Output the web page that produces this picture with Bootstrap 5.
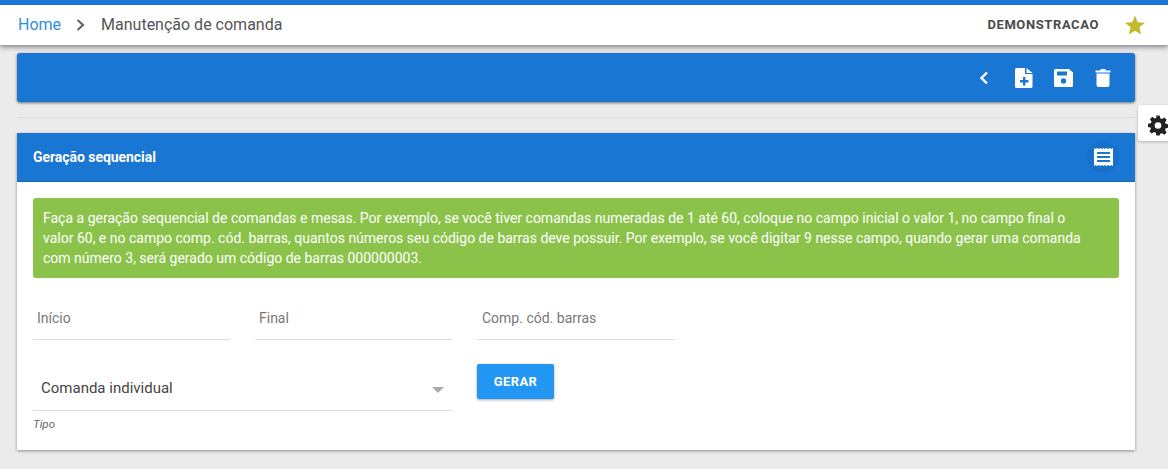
<!DOCTYPE html>
<html lang="pt-BR">
<head>
<meta charset="utf-8">
<title>Manutenção de comanda</title>
<link href="https://cdn.jsdelivr.net/npm/bootstrap@5.3.0/dist/css/bootstrap.min.css" rel="stylesheet">
<style>
html,body{height:469px;overflow:hidden}
body{background:#ebebeb;font-family:Roboto,"Liberation Sans",sans-serif;color:#555}
.topbar{height:45px;background:#fff;border-top:5px solid #1976d2;box-shadow:0 2px 5px rgba(0,0,0,.45);padding:0 23px 0 18px;position:relative;z-index:2}
.crumb-home{color:#2f8fe0;font-size:16px;text-decoration:none}
.crumb-cur{font-size:16px;color:#555;margin-left:15px}
.crumb-sep{margin-left:15px;display:block}
.company{font-size:13px;font-weight:700;letter-spacing:.6px;color:#4a4a4a;margin-right:26px}
.pagewrap{padding:8px 33px 0 17px}
.toolrow{height:49px;background:#1976d2;border-radius:3px;box-shadow:0 1px 3px rgba(0,0,0,.55);padding-right:24px}
.toolsvg{display:block;fill:#fff}
.tool-back{margin-right:25px}
.tool-new{margin-right:21px}
.tool-save{margin-right:22px}
.sepline{height:1px;background:#dcdcdc;margin:15px 0}
.panel{height:317px;background:#fff;box-shadow:0 1px 3px rgba(0,0,0,.4)}
.panelhead{height:49px;background:#1976d2;color:#fff;padding:0 16px;border-bottom:1px solid #1669bd}
.paneltitle{font-size:14px;font-weight:700;letter-spacing:-.05px}
.iconround{width:32px;height:32px;border-radius:50%;background:#1870c8}
.panelbody{padding:16px 16px 0}
.infobox{height:80px;background:#8bc34a;color:#fff;font-size:14px;line-height:20px;border-radius:3px;padding:10px 24px 0 10px}
.fieldrow{gap:25px;margin-top:22px}
.fieldbox{width:197px;height:40px;border-bottom:1px solid #ddd;font-size:14px;color:#777;padding:8px 4px 0;line-height:20px}
.fieldbox.wide{width:198px;padding-left:5px}
.selwrap{width:419px}
.selbox{height:46px;border-bottom:1px solid #ddd;padding:2px 8px 0 8px;font-size:15px;color:#444}
.selcaret{width:0;height:0;border-left:6px solid transparent;border-right:6px solid transparent;border-top:6px solid #aaa;margin-top:2px}
.tipolabel{font-size:11.5px;font-style:italic;color:#666;margin-top:6px;line-height:14px}
.gerar{width:77px;height:35px;background:#2196f3;color:#fff;font-size:13px;font-weight:700;border:0;border-radius:2px;box-shadow:0 1px 3px rgba(0,0,0,.35);padding:0;margin-top:-1px;letter-spacing:.4px}
.row2{gap:25px;margin-top:25px}
.gearbtn{position:absolute;top:105px;left:1138px;width:40px;height:36px;background:#fff;border-radius:3px;box-shadow:0 1px 3px rgba(0,0,0,.25);padding:8px 0 0 10px}
</style>
</head>
<body>
<header class="topbar d-flex align-items-center justify-content-between">
  <nav class="d-flex align-items-center">
    <a class="crumb-home" href="#">Home</a>
    <svg class="crumb-sep" width="10" height="14" viewBox="0 0 10 14"><path d="M1.500 2L7 7l-5.500 5" fill="none" stroke="#666" stroke-width="2.200"/></svg>
    <span class="crumb-cur">Manutenção de comanda</span>
  </nav>
  <div class="d-flex align-items-center">
    <span class="company">DEMONSTRACAO</span>
    <svg width="20" height="20" viewBox="0 0 22 21"><path d="M11 0l3 7.400 8 .6-6.100 5.100L17.800 21 11 16.800 4.200 21l1.900-7.900L0 8l8-.6z" fill="#c0ba2c"/></svg>
  </div>
</header>
<main class="pagewrap">
  <div class="toolrow d-flex align-items-center justify-content-end">
    <svg class="toolsvg tool-back" width="12" height="14" viewBox="0 0 12 14"><path d="M9 1.500L3.500 7 9 12.500" fill="none" stroke="#fff" stroke-width="2.400"/></svg>
    <svg class="toolsvg tool-new" width="18" height="20" viewBox="0 0 18 20"><path d="M1.500 0H10v6h7.500v12.500a1.500 1.500 0 0 1-1.500 1.500H1.500A1.500 1.500 0 0 1 0 18.500v-17A1.500 1.500 0 0 1 1.500 0z"/><path d="M11.500 0l6 5h-6z"/><path d="M8 9h2.400v3h3v2.400h-3v3H8v-3H5v-2.400h3z" fill="#1976d2"/></svg>
    <svg class="toolsvg tool-save" width="19" height="18" viewBox="0 0 19 18"><path d="M1.500 0H15l4 3.500v13a1.500 1.500 0 0 1-1.500 1.500h-16A1.500 1.500 0 0 1 0 16.500v-15A1.500 1.500 0 0 1 1.500 0z"/><path d="M3 2.500h10v4H3z" fill="#1976d2"/><circle cx="9.500" cy="12" r="2.700" fill="#1976d2"/></svg>
    <svg class="toolsvg" width="16" height="18" viewBox="0 0 15 18"><path d="M0 1.500h4.500L5.500 0h4l1 1.500H15v2H0z"/><path d="M1 4.500h13V16a2 2 0 0 1-2 2H3a2 2 0 0 1-2-2z"/></svg>
  </div>
  <div class="sepline"></div>
  <section class="panel">
    <div class="panelhead d-flex align-items-center justify-content-between">
      <span class="paneltitle">Geração sequencial</span>
      <span class="iconround d-flex align-items-center justify-content-center">
        <svg width="19" height="18" viewBox="0 0 19 18"><path d="M0 0l1.600 1L3.200 0l1.600 1L6.400 0 8 1l1.500-1L11 1l1.600-1 1.600 1 1.600-1 1.600 1L19 0v18l-1.600-1-1.600 1-1.600-1-1.600 1L11 17l-1.500 1L8 17l-1.600 1-1.600-1-1.600 1-1.600-1L0 18z" fill="#fff"/><path d="M3 4h13v2H3zM3 8h13v2H3zM3 12h13v2H3z" fill="#1976d2"/></svg>
      </span>
    </div>
    <div class="panelbody">
      <div class="infobox">Faça a geração sequencial de comandas e mesas. Por exemplo, se você tiver comandas numeradas de 1 até 60, coloque no campo inicial o valor 1, no campo final o valor 60, e no campo comp. cód. barras, quantos números seu código de barras deve possuir. Por exemplo, se você digitar 9 nesse campo, quando gerar uma comanda com número 3, será gerado um código de barras 000000003.</div>
      <div class="fieldrow d-flex">
        <div class="fieldbox">Início</div>
        <div class="fieldbox">Final</div>
        <div class="fieldbox wide">Comp. cód. barras</div>
      </div>
      <div class="row2 d-flex align-items-start">
        <div class="selwrap">
          <div class="selbox d-flex align-items-center justify-content-between"><span>Comanda individual</span><span class="selcaret"></span></div>
          <div class="tipolabel">Tipo</div>
        </div>
        <button class="gerar" type="button">GERAR</button>
      </div>
    </div>
  </section>
</main>
<div class="gearbtn">
  <svg width="20" height="21" viewBox="0 0 24 24"><path fill-rule="evenodd" d="M10 0h4l.7 3.400 2 .8L19.600 2.300l2.800 2.800-1.900 2.900.8 2 3.400.7v4l-3.400.7-.8 2 1.900 2.900-2.800 2.800-2.900-1.900-2 .8L14 24h-4l-.7-3.400-2-.8-2.900 1.900-2.800-2.800 1.900-2.900-.8-2L0 14v-4l3.400-.7.8-2-1.900-2.900 2.800-2.800 2.900 1.900 2-.8zM12 8a4 4 0 1 0 0 8 4 4 0 0 0 0-8z" fill="#222"/></svg>
</div>
<script src="https://cdn.jsdelivr.net/npm/bootstrap@5.3.0/dist/js/bootstrap.bundle.min.js"></script>
</body>
</html>
